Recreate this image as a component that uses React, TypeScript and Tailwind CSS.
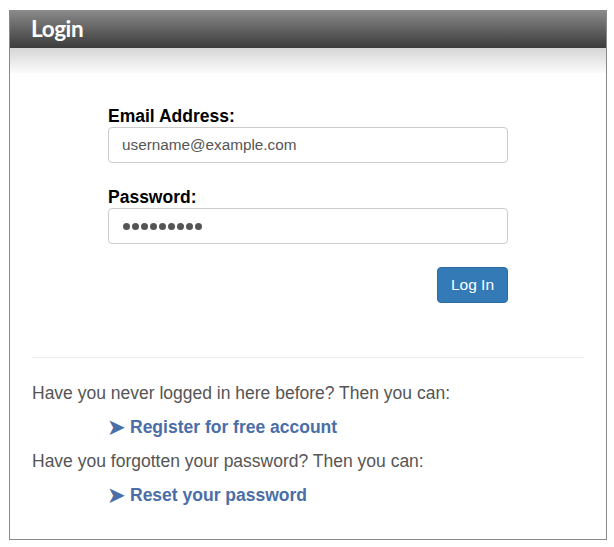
export default function App() {
  return (
    <div className="w-[614px] h-[547px] bg-white pt-[10px] pl-[9px]" style={{ fontFamily: '"Liberation Sans", Arial, sans-serif' }}>
      <div className="w-[598px] h-[530px] border border-[#8a8a8a] border-t-0 flex flex-col">
        <div className="h-[38px] bg-gradient-to-b from-[#8c8c8c] to-[#3c3c3c] flex items-center pl-[21px]">
          <span className="text-white font-bold text-[22.5px] leading-none tracking-[-0.4px]" style={{ fontFamily: 'Lato, "Open Sans", sans-serif' }}>Login</span>
        </div>
        <div className="h-[25px] bg-gradient-to-b from-[#d6d6d6] to-[#fbfbfb]" />
        <div className="pl-[98px] pr-[98px] pt-[33px]">
          <label className="block text-[17.5px] font-bold text-black leading-[20px]">Email Address:</label>
          <div className="mt-[1px] h-[36px] border border-[#cccccc] rounded-[4px] flex items-center pl-[13px] text-[15.3px] text-[#555]">username@example.com</div>
          <label className="block mt-[24px] text-[17.5px] font-bold text-black leading-[20px]">Password:</label>
          <div className="mt-[1px] h-[36px] border border-[#cccccc] rounded-[4px] flex items-center pl-[14px] gap-[2px]">
            {Array.from({ length: 9 }).map((_, i) => (
              <span key={i} className="w-[7px] h-[7px] rounded-full bg-[#555]" />
            ))}
          </div>
          <div className="flex justify-end mt-[23px]">
            <button className="w-[71px] h-[36px] bg-[#337ab7] border border-[#2e6da4] rounded-[4px] text-white text-[15.5px]">Log In</button>
          </div>
        </div>
        <div className="mx-[22px] mt-[54px] h-px bg-[#eeeeee]" />
        <div className="px-[22px] pt-[25px] text-[17.5px] text-[#555]">
          <p className="leading-[20px]">Have you never logged in here before? Then you can:</p>
          <a className="mt-[14px] ml-[76px] flex items-center gap-[5px] text-[#4a6ea8] font-bold text-[17.5px] leading-[20px]">
            <span className="text-[20px]">➤</span>Register for free account
          </a>
          <p className="mt-[14px] leading-[20px]">Have you forgotten your password? Then you can:</p>
          <a className="mt-[14px] ml-[76px] flex items-center gap-[5px] text-[#4a6ea8] font-bold text-[17.5px] leading-[20px]">
            <span className="text-[20px]">➤</span>Reset your password
          </a>
        </div>
      </div>
    </div>
  );
}
